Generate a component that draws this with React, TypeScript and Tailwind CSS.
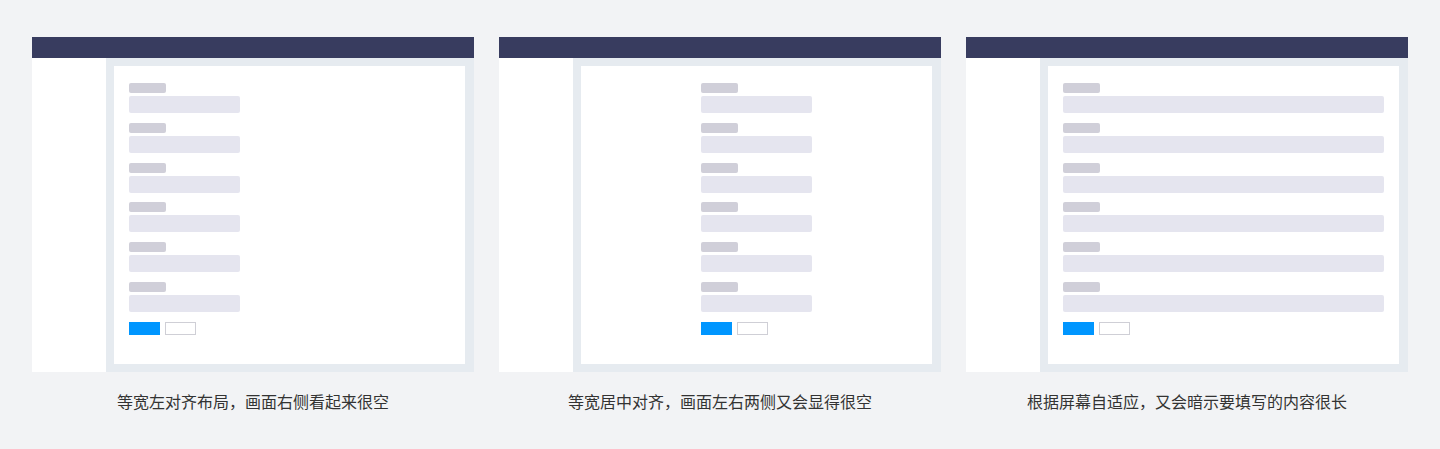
type Layout = "left" | "center" | "full";

type PanelProps = {
  layout: Layout;
  caption: string;
};

const formWidth: Record<Layout, string> = {
  left: "w-[111px]",
  center: "mx-auto w-[111px]",
  full: "w-full",
};

function Panel({ layout, caption }: PanelProps) {
  return (
    <div className="flex flex-col">
      <div className="flex h-[335px] flex-col">
        {/* Top bar */}
        <div className="h-[21px] bg-[#383c5f]" />
        <div className="flex flex-1">
          {/* Sidebar */}
          <div className="w-[74px] bg-white" />
          {/* Content */}
          <div className="flex-1 bg-[#e6ebf0] py-2 pl-2 pr-[9px]">
            <div className="h-full bg-white px-[15px] pt-[17px]">
              <div className={`flex flex-col gap-[9.8px] ${formWidth[layout]}`}>
                {[0, 1, 2, 3, 4, 5].map((i) => (
                  <div key={i} className="flex flex-col">
                    <div className="h-[10px] w-[37px] rounded-[2px] bg-[#d0cfd9]" />
                    <div className="mt-[3px] h-[17px] w-full rounded-[2px] bg-[#e5e5ef]" />
                  </div>
                ))}
                <div className="flex gap-[5px]">
                  <div className="h-[13px] w-[31px] bg-[#0096ff]" />
                  <div className="h-[13px] w-[31px] border border-[#cfcfd6] bg-white" />
                </div>
              </div>
            </div>
          </div>
        </div>
      </div>
      <p className="mt-[17px] text-center text-[16px] leading-[24px] text-[#333333] [font-family:'Noto_Sans_CJK_SC',sans-serif]">
        {caption}
      </p>
    </div>
  );
}

export default function App() {
  return (
    <div className="h-[449px] w-[1440px] bg-[#f2f3f5] px-8 pt-[37px]">
      <div className="grid grid-cols-3 gap-[25px]">
        <Panel layout="left" caption="等宽左对齐布局，画面右侧看起来很空" />
        <Panel layout="center" caption="等宽居中对齐，画面左右两侧又会显得很空" />
        <Panel layout="full" caption="根据屏幕自适应，又会暗示要填写的内容很长" />
      </div>
    </div>
  );
}
